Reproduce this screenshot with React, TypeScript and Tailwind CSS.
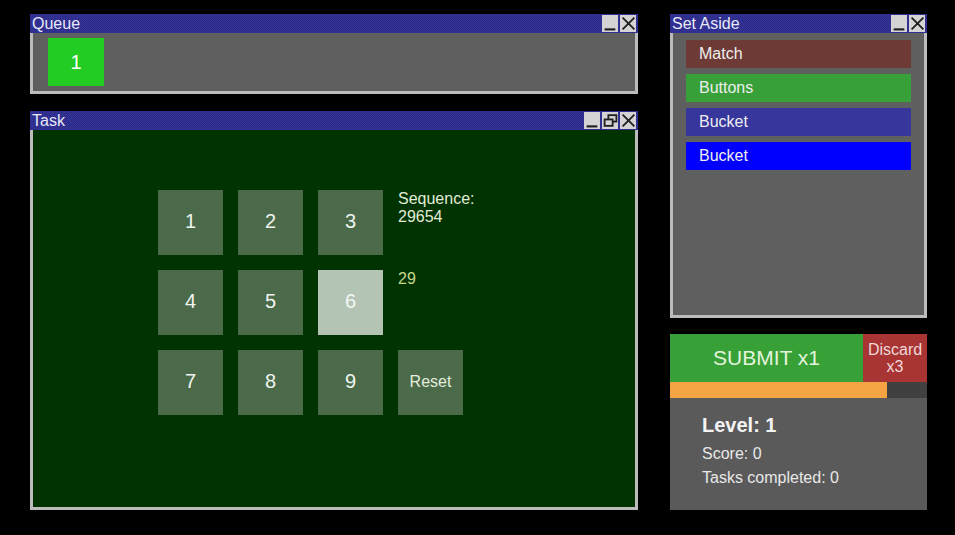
import React from "react";

type WinProps = {
  title: string;
  restore?: boolean;
  className?: string;
  bodyClassName?: string;
  children?: React.ReactNode;
};

const TitleButton = ({ kind }: { kind: "min" | "max" | "close" }) => (
  <div className="flex h-[17px] w-[16px] items-center justify-center bg-[#d4d4d4]">
    <svg width="15" height="15" viewBox="0 0 14 14" fill="none" stroke="#202020" strokeWidth="2">
      {kind == "min" && <path d="M1.5 12.5 H11.5" />}
      {kind == "max" && (
        <>
          <rect x="5" y="2" width="7.5" height="6" strokeWidth="1.7" />
          <rect x="1.5" y="6" width="7.5" height="6" strokeWidth="1.7" fill="#d4d4d4" />
        </>
      )}
      {kind == "close" && <path d="M1.5 1.5 L12.5 12.5 M12.5 1.5 L1.5 12.5" strokeWidth="1.7" />}
    </svg>
  </div>
);

const Window = ({ title, restore, className, bodyClassName, children }: WinProps) => {
  return (
    <div className={"flex flex-col " + (className || "")}>
      <div className="flex h-[19px] items-center justify-between bg-[#2e2e8c] bg-[image:repeating-conic-gradient(#34349a_0_25%,#28288080_0_50%)] bg-size-[2px_2px] pl-[2px] pr-[2px]">
        <span className="text-[16px] leading-none text-[#e8e8f8]">{title}</span>
        <div className="flex gap-[2px]">
          <TitleButton kind="min" />
          {restore && <TitleButton kind="max" />}
          <TitleButton kind="close" />
        </div>
      </div>
      <div className={"flex-1 border-x-[3px] border-b-[3px] border-[#bcbcbc] " + (bodyClassName || "")}>
        {children}
      </div>
    </div>
  );
};

const keys = ["1", "2", "3", "4", "5", "6", "7", "8", "9"];

export default function App() {
  return (
    <div
      className="flex h-[535px] w-[955px] gap-[32px] bg-black pl-[30px] pt-[14px] text-white"
      style={{ fontFamily: '"Liberation Sans", Arial, sans-serif' }}
    >
      {/* left column */}
      <div className="flex w-[608px] flex-col gap-[17px]">
        <Window title="Queue" className="h-[80px]" bodyClassName="bg-[#5f5f5f] pl-[15px] pt-[5px]">
          <div className="flex h-[48px] w-[56px] items-center justify-center bg-[#22cc22] text-[20px]">
            1
          </div>
        </Window>

        <Window
          title="Task"
          restore
          className="h-[399px]"
          bodyClassName="bg-[#003300] pl-[125px] pt-[60px]"
        >
          <div className="grid w-[305px] grid-cols-[65px_65px_65px_80px] gap-x-[15px] gap-y-[15px]">
            {keys.map((k, i) => (
              <React.Fragment key={k}>
                <div
                  className={
                    "flex h-[65px] w-[65px] items-center justify-center pb-[4px] text-[20px] " +
                    (k == "6" ? "bg-[#b4c4b4] text-[#f4f8f4]" : "bg-[#4a6a4a] text-[#f0f4f0]")
                  }
                >
                  {k}
                </div>
                {i == 2 && (
                  <div className="text-[16px] leading-[18px] text-[#e0ecd8]">
                    Sequence:
                    <br />
                    29654
                  </div>
                )}
                {i == 5 && <div className="text-[16px] leading-[18px] text-[#c4d890]">29</div>}
                {i == 8 && (
                  <div className="flex h-[65px] w-[65px] items-center justify-center bg-[#4a6a4a] pb-[2px] text-[16px] text-[#e4ecdc]">
                    Reset
                  </div>
                )}
              </React.Fragment>
            ))}
          </div>
        </Window>
      </div>

      {/* right column */}
      <div className="flex w-[257px] flex-col gap-[16px]">
        <Window title="Set Aside" className="h-[304px]" bodyClassName="flex flex-col gap-[6px] bg-[#5f5f5f] px-[13px] pt-[7px]">
          {[
            { label: "Match", bg: "bg-[#6e3a35]" },
            { label: "Buttons", bg: "bg-[#38a038]" },
            { label: "Bucket", bg: "bg-[#36369c]" },
            { label: "Bucket", bg: "bg-[#0000fc]" },
          ].map((item, i) => (
            <div key={i} className={"flex h-[28px] items-center pl-[13px] text-[16px] text-[#eeeeee] " + item.bg}>
              {item.label}
            </div>
          ))}
        </Window>

        <div className="flex h-[176px] flex-col">
          <div className="flex h-[48px]">
            <div className="flex flex-1 items-center justify-center bg-[#37a037] text-[21px] text-[#e4f4dc]">
              SUBMIT x1
            </div>
            <div className="flex w-[64px] flex-col items-center justify-center bg-[#a83434] text-[16px] leading-[17px] text-[#f0d8d8]">
              <span>Discard</span>
              <span>x3</span>
            </div>
          </div>
          <div className="flex h-[16px] bg-[#404040]">
            <div className="w-[217px] bg-[#f5a444]" />
          </div>
          <div className="flex flex-1 flex-col bg-[#5a5a5a] pl-[32px] pt-[15px]">
            <div className="text-[20px] font-bold leading-[24px] text-[#f4f4f4]">Level: 1</div>
            <div className="mt-[5px] text-[16px] leading-[24px] text-[#e8e8e8]">Score: 0</div>
            <div className="text-[16px] leading-[24px] text-[#e8e8e8]">Tasks completed: 0</div>
          </div>
        </div>
      </div>
    </div>
  );
}
